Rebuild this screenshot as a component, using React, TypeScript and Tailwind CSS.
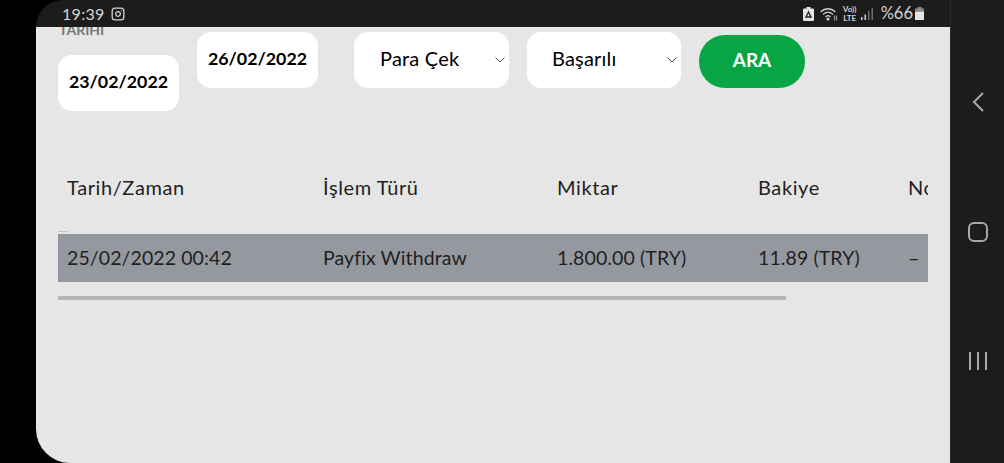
import { Instagram } from "lucide-react";

const font = { fontFamily: '"Lato", "Liberation Sans", sans-serif' };

const columns = [
    { label: "Tarih/Zaman", value: "25/02/2022 00:42", width: "w-[256px]" },
    { label: "İşlem Türü", value: "Payfix Withdraw", width: "w-[234px]" },
    { label: "Miktar", value: "1.800.00 (TRY)", width: "w-[201px]" },
    { label: "Bakiye", value: "11.89 (TRY)", width: "w-[150px]" },
    { label: "Not", value: "–", width: "w-[100px]" },
];

function StatusBar() {
    return (
        <div className="h-[27px] shrink-0 bg-[#1c1c1c] rounded-tl-[28px] flex items-center pl-[26px] pr-[26px] text-[#d4d4d4]">
            <span className="text-[16px] leading-none tracking-[0.3px]">19:39</span>
            <Instagram className="ml-[6px] w-[14px] h-[14px]" strokeWidth={2.2} />
            <div className="ml-auto flex items-center">
                {/* battery saver */}
                <svg width="11" height="14" viewBox="0 0 11 14">
                    <path d="M3.5 0h4v1.5H10a1 1 0 0 1 1 1V13a1 1 0 0 1-1 1H1a1 1 0 0 1-1-1V2.500a1 1 0 0 1 1-1h2.500z" fill="#e4e4e4" />
                    <path d="M5.500 5L8 10H3z" fill="none" stroke="#1c1c1c" strokeWidth="1.300" />
                </svg>
                {/* wifi */}
                <svg className="ml-[6px]" width="18" height="14" viewBox="0 0 18 14" fill="none" stroke="#d4d4d4" strokeWidth="1.300" strokeLinecap="round">
                    <path d="M1 4.500C5 .8 11 .8 15 4.500" />
                    <path d="M3.500 7C6.300 4.600 9.700 4.600 12.500 7" />
                    <path d="M6 9.500C7.300 8.400 8.700 8.400 10 9.500" />
                    <circle cx="8" cy="12" r="0.900" fill="#d4d4d4" />
                    <path d="M14.500 9v4M16.500 9v4" stroke="#8a8a8a" />
                </svg>
                <div className="ml-[5px] w-[14px] text-[8px] leading-[9px] font-bold text-center">
                    <div>Vo))</div>
                    <div>LTE</div>
                </div>
                {/* signal */}
                <svg className="ml-[4px]" width="13" height="14" viewBox="0 0 13 14">
                    <rect x="0" y="10" width="1.500" height="3" fill="#d4d4d4" />
                    <rect x="3.500" y="7.500" width="1.500" height="5.500" fill="#d4d4d4" />
                    <rect x="7" y="4" width="1.500" height="9" fill="#6f6f6f" />
                    <rect x="10.500" y="1" width="1.500" height="12" fill="#6f6f6f" />
                </svg>
                <span className="ml-[7px] text-[16.500px] leading-none">%66</span>
                {/* battery */}
                <svg className="ml-[2px]" width="9" height="13" viewBox="0 0 9 13">
                    <rect x="2.500" y="0" width="4" height="2" fill="#8a8a8a" />
                    <rect x="0" y="1.500" width="9" height="3" fill="#8a8a8a" />
                    <rect x="0" y="4.500" width="9" height="8.500" fill="#e4e4e4" />
                </svg>
            </div>
        </div>
    );
}

function DateBox({ value }: { value: string }) {
    return (
        <div className="w-[121px] h-[56px] bg-white rounded-[14px] flex items-center justify-center pb-[3px] text-black text-[17.800px] font-bold">
            {value}
        </div>
    );
}

function SelectBox({ value, className }: { value: string; className: string }) {
    return (
        <div className={`h-[56px] bg-white rounded-[14px] flex items-center text-black text-[20px] tracking-[0.2px] ${className}`}>
            <span className="flex-1 pb-[4px]">{value}</span>
            <svg className="mr-[4px]" width="10" height="6" viewBox="0 0 10 6" fill="none" stroke="#555555" strokeWidth="1">
                <path d="M.5 .5L5 5l4.500-4.500" />
            </svg>
        </div>
    );
}

function Filters() {
    return (
        <div className="flex items-start pl-[22px] pt-[5px]">
            <div className="flex flex-col -mt-[10px]">
                <span className="h-[33px] pl-[1px] text-[14px] leading-[16px] font-bold text-[#777777]">TARİHİ</span>
                <DateBox value="23/02/2022" />
            </div>
            <div className="ml-[18px]">
                <DateBox value="26/02/2022" />
            </div>
            <SelectBox value="Para Çek" className="ml-[36px] w-[155px] pl-[26px]" />
            <SelectBox value="Başarılı" className="ml-[18px] w-[154px] pl-[25px]" />
            <button className="ml-[18px] mt-[3px] w-[106px] h-[53px] rounded-[26px] bg-[#07a544] text-white text-[19px] font-bold pb-[2px]">
                ARA
            </button>
        </div>
    );
}

function Table() {
    return (
        <div className="ml-[22px] mt-[54px] w-[870px]">
            <div className="overflow-hidden text-[#1f1f1f]">
                <div className="flex w-[960px] h-[44px] items-center text-[20px] tracking-[0.6px]">
                    {columns.map((col) => (
                        <div key={col.label} className={`${col.width} pl-[9px]`}>
                            {col.label}
                        </div>
                    ))}
                </div>
                <div className="mt-[22px] mb-[2px] w-[10px] h-px bg-[#c4c4c4]" />
                <div className="bg-[#96989f]">
                    <div className="flex w-[960px] h-[48px] items-center pb-[1px] text-[19.500px] tracking-[0.1px]">
                        {columns.map((col) => (
                            <div key={col.label} className={`${col.width} pl-[9px]`}>
                                {col.value}
                            </div>
                        ))}
                    </div>
                </div>
            </div>
            <div className="mt-[14px] w-[728px] h-[4px] bg-[#b6b6b6]" />
        </div>
    );
}

function NavBar() {
    return (
        <div className="w-[54px] shrink-0 bg-[#1c1c1c] border-l border-[#2c2c2c] flex flex-col items-center pt-[92px]">
            <svg width="12" height="20" viewBox="0 0 12 20" fill="none" stroke="#a8a8a8" strokeWidth="2">
                <path d="M11 1L2 10l9 9" />
            </svg>
            <div className="mt-[110px] w-[20px] h-[20px] rounded-[6px] border-2 border-[#a8a8a8]" />
            <div className="mt-[110px] flex gap-[6px]">
                <div className="w-[2px] h-[18px] bg-[#a8a8a8]" />
                <div className="w-[2px] h-[18px] bg-[#a8a8a8]" />
                <div className="w-[2px] h-[18px] bg-[#a8a8a8]" />
            </div>
        </div>
    );
}

export default function App() {
    return (
        <div className="w-[1004px] h-[463px] bg-black flex overflow-hidden pl-[36px]" style={font}>
            <div className="flex-1 flex flex-col min-w-0">
                <StatusBar />
                <div className="flex-1 bg-[#e6e6e6] rounded-bl-[34px] overflow-hidden">
                    <Filters />
                    <Table />
                </div>
            </div>
            <NavBar />
        </div>
    );
}
